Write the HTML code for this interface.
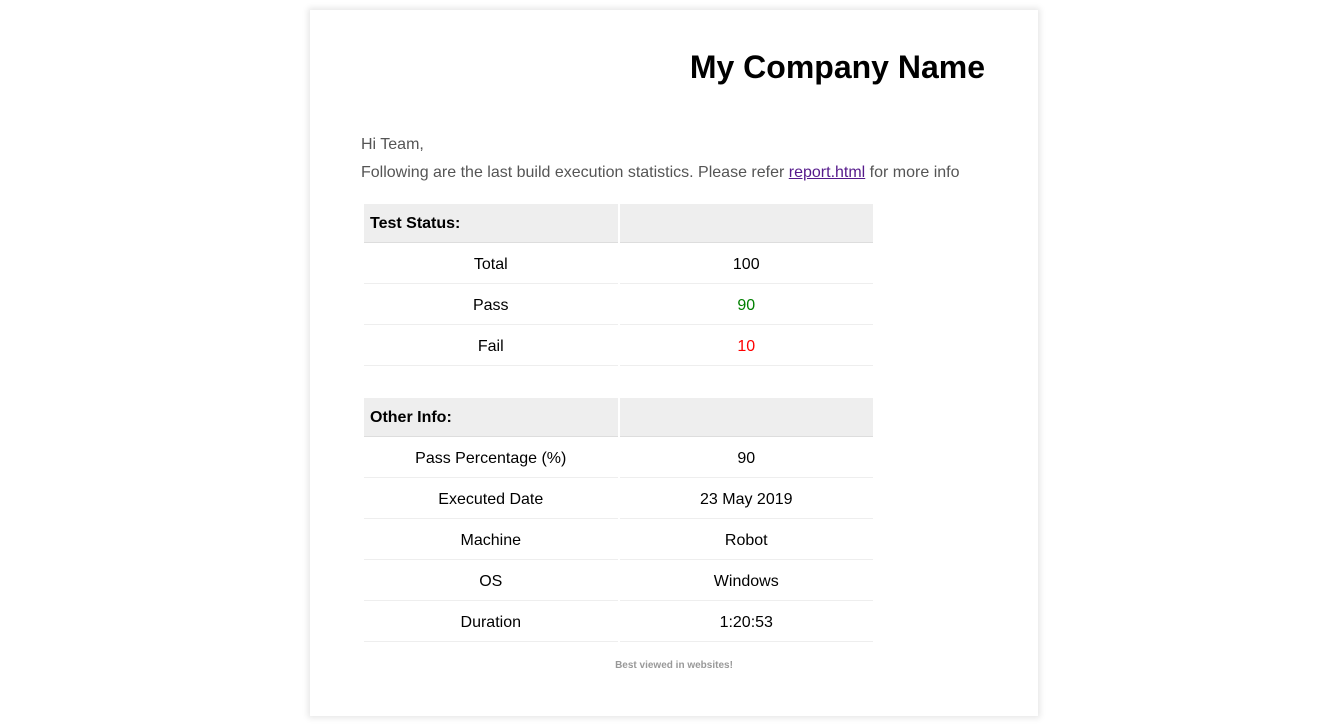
<!DOCTYPE html>
<html><head><style>
body{margin:0;background:#fff;font-family:"Liberation Sans",Arial,sans-serif;}
.card{position:absolute;left:310px;top:10px;width:728px;height:706px;background:#fff;box-shadow:0 0 6px 2px rgba(0,0,0,0.1);}
h1{position:absolute;left:0;width:675px;text-align:right;top:39px;margin:0;font-size:32px;font-weight:bold;color:#000;}
.p{position:absolute;left:51px;color:#555;font-size:16px;}
.p a{color:#551a8b;}
table{position:absolute;left:52px;border-collapse:separate;border-spacing:2px 0;width:513px;}
td{width:254px;text-align:center;font-size:16px;color:#000;border-bottom:1px solid #eee;padding:3px 0 0 0;box-sizing:border-box;height:41px;}
th{height:37px;background:#eee;text-align:left;padding:1px 0 0 6px;font-size:16px;border-bottom:1px solid #ddd;}
.foot{position:absolute;left:0;width:728px;text-align:center;top:650px;font-size:10px;font-weight:bold;color:#999;}
</style></head><body>
<div class="card">
<h1>My Company Name</h1>
<div class="p" style="top:126px">Hi Team,</div>
<div class="p" style="top:154px">Following are the last build execution statistics. Please refer <a href="#">report.html</a> for more info</div>
<table style="top:194px">
<tr><th>Test Status:</th><th></th></tr>
<tr><td>Total</td><td>100</td></tr>
<tr><td>Pass</td><td style="color:green">90</td></tr>
<tr><td>Fail</td><td style="color:red">10</td></tr>
</table>
<table style="top:388px">
<tr><th>Other Info:</th><th></th></tr>
<tr><td>Pass Percentage (%)</td><td>90</td></tr>
<tr><td>Executed Date</td><td>23 May 2019</td></tr>
<tr><td>Machine</td><td>Robot</td></tr>
<tr><td>OS</td><td>Windows</td></tr>
<tr><td>Duration</td><td>1:20:53</td></tr>
</table>
<div class="foot">Best viewed in websites!</div>
</div>
</body></html>
